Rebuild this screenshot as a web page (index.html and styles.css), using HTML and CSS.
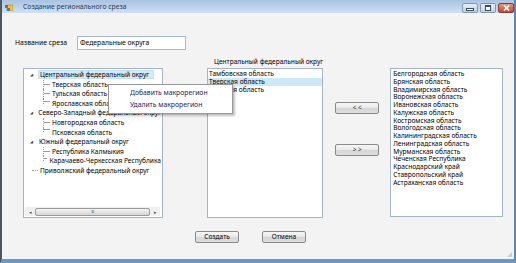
FILE: index.html
```html
<!DOCTYPE html>
<html>
  <head>
    <title>Создание регионального среза</title>
    <link rel="stylesheet" href="styles.css">
  </head>
  <body>
    <div class="window">
      <div class="titlebar">
        <svg class="app-icon" width="8" height="8" viewBox="0 0 8 8">
          <rect x="2" y="2" width="6" height="6" fill="#f2c230" stroke="#b58a12" stroke-width="0.6"/>
          <rect x="0" y="2" width="3" height="3" fill="#e0432e"/>
          <rect x="2" y="5" width="3" height="3" fill="#3b7fd8"/>
        </svg>
        <span class="title">Создание регионального среза</span>
        <div class="caption-btns">
          <span class="cbtn"><span class="glyph-min"></span></span>
          <span class="cbtn"><span class="glyph-max"></span></span>
          <span class="cbtn close">
            <svg width="7" height="6" viewBox="0 0 7 6"><path d="M1 0.5 L6 5.5 M6 0.5 L1 5.5" stroke="#fff" stroke-width="1.6"/></svg>
          </span>
        </div>
      </div>

      <div class="client">
        <div class="name-row">
          <span class="name-label">Название среза</span>
          <div class="textbox">Федеральные округа</div>
        </div>

        <div class="main">
          <div class="tree">
            <div class="tree-items">
              <div class="node"><span class="tog">&#9698;</span><span class="lbl sel">Центральный федеральный округ</span></div>
              <div class="kids">
                <div class="leaf"><span class="ln"></span><span class="lbl">Тверская область</span></div>
                <div class="leaf"><span class="ln"></span><span class="lbl">Тульская область</span></div>
                <div class="leaf"><span class="ln"></span><span class="lbl">Ярославская область</span></div>
              </div>
              <div class="node"><span class="tog">&#9698;</span><span class="lbl">Северо-Западный федеральный округ</span></div>
              <div class="kids">
                <div class="leaf"><span class="ln"></span><span class="lbl">Новгородская область</span></div>
                <div class="leaf"><span class="ln"></span><span class="lbl">Псковская область</span></div>
              </div>
              <div class="node"><span class="tog">&#9698;</span><span class="lbl">Южный федеральный округ</span></div>
              <div class="kids">
                <div class="leaf"><span class="ln"></span><span class="lbl">Республика Калмыкия</span></div>
                <div class="leaf"><span class="ln"></span><span class="lbl">Карачаево-Черкесская Республика</span></div>
              </div>
              <div class="node"><span class="tog dash"></span><span class="lbl">Приволжский федеральный округ</span></div>
            </div>
            <div class="hscroll">
              <span class="arrow">&#9666;</span>
              <span class="thumb"><span class="grip">III</span></span>
              <span class="arrow">&#9656;</span>
            </div>
          </div>

          <div class="middle">
            <div class="mid-label">Центральный федеральный округ</div>
            <div class="listbox mid-list">
              <div class="item">Тамбовская область</div>
              <div class="item sel">Тверская область</div>
              <div class="item">Тульская область</div>
            </div>
          </div>

          <div class="move-btns">
            <button class="btn move">&lt; &lt;</button>
            <button class="btn move">&gt; &gt;</button>
          </div>

          <div class="listbox right-list">
            <div class="item">Белгородская область</div>
            <div class="item">Брянская область</div>
            <div class="item">Владимирская область</div>
            <div class="item">Воронежская область</div>
            <div class="item">Ивановская область</div>
            <div class="item">Калужская область</div>
            <div class="item">Костромская область</div>
            <div class="item">Вологодская область</div>
            <div class="item">Калининградская область</div>
            <div class="item">Ленинградская область</div>
            <div class="item">Мурманская область</div>
            <div class="item">Чеченская Республика</div>
            <div class="item">Краснодарский край</div>
            <div class="item">Ставропольский край</div>
            <div class="item">Астраханская область</div>
          </div>
        </div>

        <div class="bottom-row">
          <button class="btn action">Создать</button>
          <button class="btn action">Отмена</button>
        </div>
        <span class="grip-corner"></span>
      </div>

      <div class="context-menu">
        <div class="menu-item">Добавить макрорегион</div>
        <div class="menu-item">Удалить макрорегион</div>
      </div>
    </div>
  </body>
</html>
```

FILE: styles.css
```css
html,
body {
  margin: 0;
  padding: 0;
  background: #ffffff;
}

body {
  font-family: "Noto Sans", "Open Sans", sans-serif;
  font-size: 6.6px;
  color: #000000;
}

.window {
  position: relative;
  width: 516px;
  height: 263px;
  box-sizing: border-box;
  border-left: 2px solid #4d5863;
  border-right: 2px solid #5f87ad;
  border-bottom: 4px solid #6b98c3;
  display: flex;
  flex-direction: column;
  background: #f4f4f4;
}

/* title bar */
.titlebar {
  height: 13px;
  display: flex;
  align-items: center;
  background: linear-gradient(#a9c3e2, #d0e0f2);
}

.app-icon {
  margin-left: 3px;
}

.title {
  margin-left: 10px;
  color: #1f3a5c;
  font-size: 6.8px;
}

.caption-btns {
  margin-left: auto;
  display: flex;
  gap: 2px;
  align-self: flex-start;
  margin-top: 3px;
}

.cbtn {
  width: 14px;
  height: 8px;
  border: 1px solid #8296ae;
  border-radius: 2px;
  background: linear-gradient(#e6eef7, #bfcfe2);
  display: flex;
  align-items: center;
  justify-content: center;
}

.cbtn.close {
  border-color: #8a3a30;
  background: linear-gradient(#e59a85, #c9442c);
}

.glyph-min {
  width: 6px;
  height: 1px;
  margin-top: 3px;
  border: 1px solid #3b4c60;
  background: #fff;
}

.glyph-max {
  width: 4px;
  height: 3px;
  border: 1px solid #3b4c60;
  border-top-width: 2px;
  background: #fff;
}

/* client area */
.client {
  flex: 1;
  position: relative;
  padding: 23px 0 0 13px;
  display: flex;
  flex-direction: column;
  background: #f3f3f3;
}

.name-row {
  display: flex;
  align-items: center;
  height: 13px;
}

.name-label {
  width: 62px;
  font-size: 6.8px;
}

.textbox {
  width: 105px;
  height: 12px;
  border: 1px solid #a7b8cc;
  background: #ffffff;
  padding-left: 2px;
  line-height: 12px;
  font-size: 6.8px;
}

.main {
  display: flex;
  margin: 8px 0 0 8px;
}

.tree {
  width: 138px;
  height: 148px;
  margin-top: 11px;
  border: 1px solid #a3b4c8;
  background: #ffffff;
  display: flex;
  flex-direction: column;
}

.tree-items {
  flex: 1;
  padding-top: 1px;
  overflow: hidden;
  white-space: nowrap;
}

.node,
.leaf {
  height: 9.6px;
  line-height: 9.6px;
  display: flex;
  align-items: center;
}

.tog {
  width: 5px;
  margin-left: 5px;
  margin-right: 4px;
  font-size: 4px;
  color: #404040;
  text-align: center;
}

.tog.dash {
  height: 1px;
  width: 6px;
  margin-left: 8px;
  margin-right: 1px;
  border-top: 1px dotted #9a9a9a;
}

.lbl {
  padding: 0 1px;
}

.lbl.sel {
  background: #d3ebf9;
  padding: 0 4px 0 1px;
  line-height: 7px;
  border: 0.5px solid #c5e0f3;
}

.kids {
  padding-left: 19px;
}

.leaf .ln {
  width: 6px;
  height: 100%;
  margin-right: 1px;
  border-left: 1px dotted #9a9a9a;
  background: linear-gradient(#9a9a9a, #9a9a9a) no-repeat 0 50% / 100% 1px;
}

.leaf:last-child .ln {
  height: 50%;
  align-self: flex-start;
}

.hscroll {
  height: 9px;
  margin: 0 2px 1px 1px;
  display: flex;
  align-items: center;
  background: #f0f0f0;
}

.arrow {
  width: 10px;
  font-size: 5px;
  color: #555;
  text-align: center;
}

.thumb {
  flex: 1;
  height: 6px;
  border: 1px solid #9a9a9a;
  border-radius: 2px;
  background: linear-gradient(#f4f4f4, #d4d4d4);
  display: flex;
  align-items: center;
  justify-content: center;
}

.grip {
  font-size: 4px;
  color: #666;
  letter-spacing: -0.5px;
}

.middle {
  margin-left: 44px;
  display: flex;
  flex-direction: column;
}

.mid-label {
  height: 11px;
  line-height: 10px;
  padding-left: 7px;
}

.listbox {
  border: 1px solid #a3b4c8;
  background: #ffffff;
  box-sizing: border-box;
  padding-top: 1px;
  white-space: nowrap;
}

.mid-list {
  width: 116px;
  height: 150px;
}

.mid-list .item {
  height: 8px;
  line-height: 8px;
  padding-left: 1px;
}

.item.sel {
  background: #cde8f6;
}

.move-btns {
  margin-left: 12px;
  padding-top: 45px;
  display: flex;
  flex-direction: column;
  gap: 30px;
}

.btn {
  font-family: "Noto Sans", "Open Sans", sans-serif;
  font-size: 6.6px;
  color: #000000;
  border: 1px solid #8a8a8a;
  border-radius: 2px;
  background: linear-gradient(#f6f6f6 0%, #e8e8e8 50%, #d6d6d6 51%, #dedede 100%);
  padding: 0;
  margin: 0;
  line-height: 10px;
}

.btn.move {
  width: 44px;
  height: 12px;
  font-size: 6.4px;
  color: #333;
}

.right-list {
  width: 113px;
  height: 149px;
  margin-top: 11px;
  margin-left: 11px;
}

.right-list .item {
  height: 7.76px;
  line-height: 7.76px;
  padding-left: 2px;
}

.bottom-row {
  display: flex;
  gap: 23px;
  margin: 13px 0 0 180px;
}

.btn.action {
  width: 44px;
  height: 12px;
}

.grip-corner {
  position: absolute;
  right: 2px;
  bottom: 2px;
  width: 5px;
  height: 5px;
  background: radial-gradient(circle, #9aa4ad 0.6px, transparent 0.8px) 0 0 / 2px 2px;
  clip-path: polygon(100% 0, 100% 100%, 0 100%);
}

/* context menu over the tree */
.context-menu {
  position: absolute;
  left: 106px;
  top: 84px;
  width: 123px;
  height: 26px;
  border: 1px solid #979797;
  background: #ffffff;
  box-shadow: 2px 2px 2px rgba(0, 0, 0, 0.25);
  padding-top: 2px;
}

.menu-item {
  height: 12px;
  line-height: 12px;
  padding-left: 21px;
  color: #1c1c5c;
  font-size: 6.8px;
}
```
